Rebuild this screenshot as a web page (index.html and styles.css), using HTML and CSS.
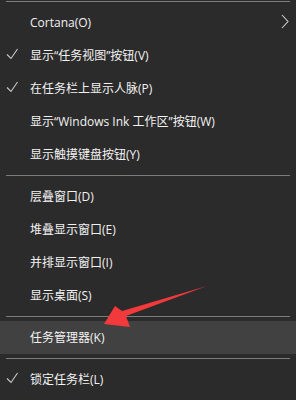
FILE: index.html
```html
<!DOCTYPE html>
<html lang="zh-CN">
<head>
<meta charset="utf-8">
<title>任务栏菜单</title>
<link rel="stylesheet" href="styles.css">
</head>
<body>
<div class="menu">
  <div class="sep sep-top"></div>
  <div class="item">
    <span class="mark"></span>
    <span class="label">Cortana(O)</span>
    <svg class="chev" width="10" height="33" viewBox="0 0 10 33"><polyline points="2,9 8,15.5 2,22" fill="none" stroke="#d0d0d0" stroke-width="1.1"/></svg>
  </div>
  <div class="item">
    <span class="mark"><svg width="30" height="33" viewBox="0 0 30 33"><polyline points="7,15.5 11,19.5 17.5,10" fill="none" stroke="#c8c8c8" stroke-width="1.1"/></svg></span>
    <span class="label">显示“任务视图”按钮(V)</span>
  </div>
  <div class="item">
    <span class="mark"><svg width="30" height="33" viewBox="0 0 30 33"><polyline points="7,15.5 11,19.5 17.5,10" fill="none" stroke="#c8c8c8" stroke-width="1.1"/></svg></span>
    <span class="label">在任务栏上显示人脉(P)</span>
  </div>
  <div class="item">
    <span class="mark"></span>
    <span class="label">显示“Windows Ink 工作区”按钮(W)</span>
  </div>
  <div class="item">
    <span class="mark"></span>
    <span class="label">显示触摸键盘按钮(Y)</span>
  </div>
  <div class="sep"></div>
  <div class="item">
    <span class="mark"></span>
    <span class="label">层叠窗口(D)</span>
  </div>
  <div class="item">
    <span class="mark"></span>
    <span class="label">堆叠显示窗口(E)</span>
  </div>
  <div class="item">
    <span class="mark"></span>
    <span class="label">并排显示窗口(I)</span>
  </div>
  <div class="item">
    <span class="mark"></span>
    <span class="label">显示桌面(S)</span>
  </div>
  <div class="sep"></div>
  <div class="item item-hover">
    <span class="mark"></span>
    <span class="label">任务管理器(K)</span>
  </div>
  <div class="sep"></div>
  <div class="item">
    <span class="mark"><svg width="30" height="33" viewBox="0 0 30 33"><polyline points="7,15.5 11,19.5 17.5,10" fill="none" stroke="#c8c8c8" stroke-width="1.1"/></svg></span>
    <span class="label">锁定任务栏(L)</span>
  </div>
</div>
<svg class="arrow" width="296" height="400" viewBox="0 0 296 400">
  <polygon points="207,286 126,316 130,327 104,324 115,306 122,311" fill="#f2393b"/>
</svg>
</body>
</html>
```
FILE: styles.css
```css
html, body {
  margin: 0;
  padding: 0;
  background: #2b2b2b;
}
body {
  width: 296px;
  height: 400px;
  overflow: hidden;
  position: relative;
  font-family: "Open Sans", "Noto Sans CJK SC", sans-serif;
  font-size: 12px;
  color: #f2f2f2;
}
.menu {
  display: flex;
  flex-direction: column;
}
.sep {
  height: 1px;
  margin: 4px 6px;
  background: #7c7c7c;
}
.sep-top {
  margin-top: 1px;
}
.item {
  height: 33px;
  display: flex;
  align-items: center;
}
.item-hover {
  background: #414141;
}
.mark {
  width: 30px;
  height: 33px;
  flex: none;
  display: block;
}
.mark svg {
  display: block;
}
.label {
  white-space: nowrap;
  line-height: 33px;
}
.chev {
  margin-left: auto;
  margin-right: 6px;
  display: block;
}
.arrow {
  position: absolute;
  left: 0;
  top: 0;
  pointer-events: none;
}
```
